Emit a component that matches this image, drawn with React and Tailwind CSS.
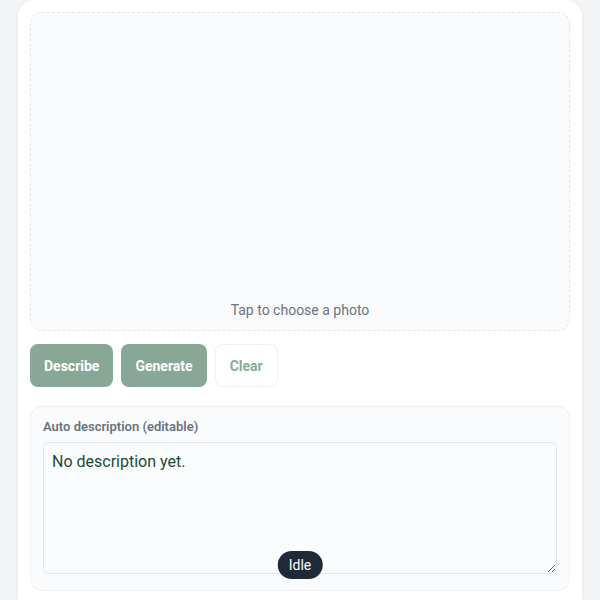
import React, { useState } from "react";

const App = () => {
  const [desc, setDesc] = useState("No description yet.");

  return (
    <div
      className="min-h-screen bg-[#f3f4f6] px-[18px]"
      style={{ fontFamily: "Roboto, 'Noto Sans', sans-serif" }}
    >
      <div className="bg-white rounded-t-2xl shadow-[0_1px_6px_rgba(0,0,0,0.05)] p-3 pb-[10px]">
        <label className="flex flex-col justify-end items-center h-[319px] rounded-xl border border-dashed border-[#e3e7ea] bg-[#fafbfc] pb-[9px] cursor-pointer">
          <span className="text-[14px] text-[#6b7280]">Tap to choose a photo</span>
        </label>

        <div className="flex gap-2 mt-[13px]">
          <button className="h-[43px] px-[14px] pt-[2px] rounded-lg bg-[#88a797] text-white text-[14px] font-bold">
            Describe
          </button>
          <button className="h-[43px] px-[14px] pt-[2px] rounded-lg bg-[#88a797] text-white text-[14px] font-bold">
            Generate
          </button>
          <button className="h-[43px] px-[14px] pt-[2px] rounded-lg bg-white border border-[#eef0f1] text-[#8aa899] text-[14px] font-bold">
            Clear
          </button>
        </div>

        <div className="mt-[19px] rounded-xl border border-[#f0f2f4] bg-[#fafbfc] px-3 pt-[12px] pb-4">
          <div className="text-[13px] font-semibold text-[#6b7280] leading-[16px] mb-[7px]">
            Auto description (editable)
          </div>
          <textarea
            value={desc}
            onChange={(e) => setDesc(e.target.value)}
            className="block w-full h-[132px] rounded-md border border-[#e5e7eb] bg-[#fbfcfd] px-2 py-[7px] text-[16px] leading-6 text-[#1b4a35] outline-none"
          />
        </div>
      </div>

      <div className="fixed bottom-[21px] left-1/2 -translate-x-1/2 h-[28px] px-[11px] flex items-center rounded-full bg-[#1f2937] text-white text-[14px]">
        Idle
      </div>
    </div>
  );
};

export default App;
